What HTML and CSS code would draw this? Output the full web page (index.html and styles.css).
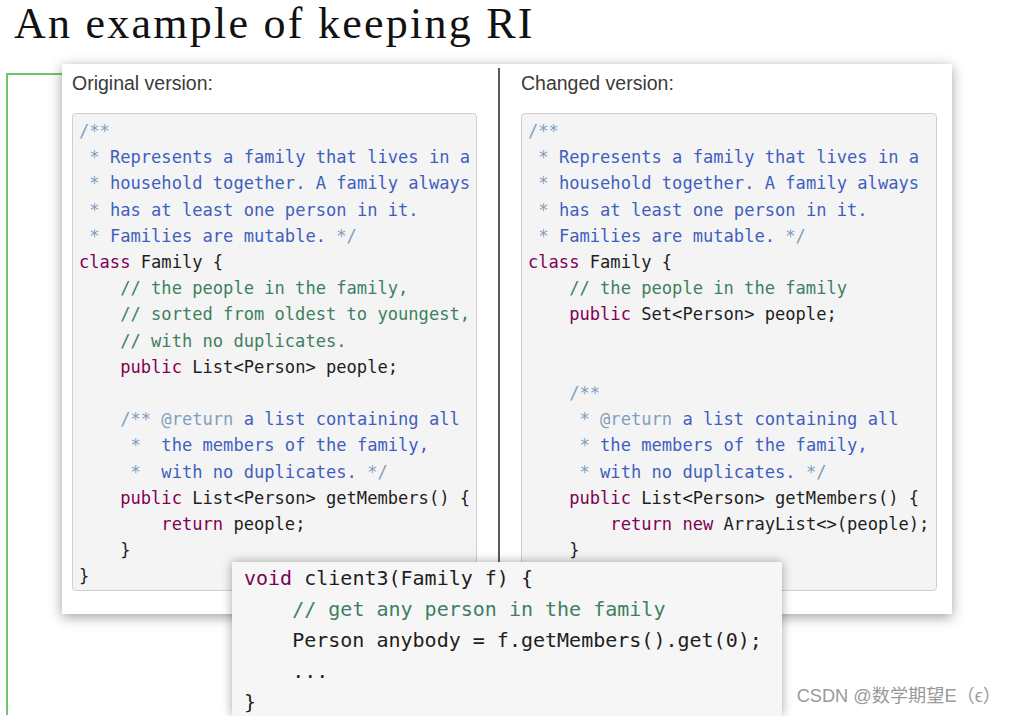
FILE: index.html
```html
<!DOCTYPE html>
<html>
<head>
<meta charset="utf-8">
<link rel="stylesheet" href="styles.css">
</head>
<body>
<h1 class="title">An example of keeping RI</h1>
<div class="stage">
  <div class="card">
    <div class="col col-left">
      <div class="label">Original version:</div>
<pre class="code"><span class="jm">/**</span>
<span class="jm"> *</span><span class="jd"> Represents a family that lives in a</span>
<span class="jm"> *</span><span class="jd"> household together. A family always</span>
<span class="jm"> *</span><span class="jd"> has at least one person in it.</span>
<span class="jm"> *</span><span class="jd"> Families are mutable. </span><span class="jm">*/</span>
<span class="kw">class</span> Family {
    <span class="cm">// the people in the family,</span>
    <span class="cm">// sorted from oldest to youngest,</span>
    <span class="cm">// with no duplicates.</span>
    <span class="kw">public</span> List&lt;Person&gt; people;

    <span class="jm">/**</span> <span class="jm">@return</span><span class="jd"> a list containing all</span>
     <span class="jm">*</span><span class="jd">  the members of the family,</span>
     <span class="jm">*</span><span class="jd">  with no duplicates. </span><span class="jm">*/</span>
    <span class="kw">public</span> List&lt;Person&gt; getMembers() {
        <span class="kw">return</span> people;
    }
}</pre>
    </div>
    <div class="divider"></div>
    <div class="col col-right">
      <div class="label">Changed version:</div>
<pre class="code"><span class="jm">/**</span>
<span class="jm"> *</span><span class="jd"> Represents a family that lives in a</span>
<span class="jm"> *</span><span class="jd"> household together. A family always</span>
<span class="jm"> *</span><span class="jd"> has at least one person in it.</span>
<span class="jm"> *</span><span class="jd"> Families are mutable. </span><span class="jm">*/</span>
<span class="kw">class</span> Family {
    <span class="cm">// the people in the family</span>
    <span class="kw">public</span> Set&lt;Person&gt; people;


    <span class="jm">/**</span>
     <span class="jm">*</span> <span class="jm">@return</span><span class="jd"> a list containing all</span>
     <span class="jm">*</span><span class="jd"> the members of the family,</span>
     <span class="jm">*</span><span class="jd"> with no duplicates. </span><span class="jm">*/</span>
    <span class="kw">public</span> List&lt;Person&gt; getMembers() {
        <span class="kw">return</span> <span class="kw">new</span> ArrayList&lt;&gt;(people);
    }
}</pre>
    </div>
  </div>
</div>
<pre class="client"><span class="kw">void</span> client3(Family f) {
    <span class="cm">// get any person in the family</span>
    Person anybody = f.getMembers().get(0);
    ...
}</pre>
<div class="watermark">CSDN @数学期望E（ϵ）</div>
</body>
</html>
```
FILE: styles.css
```css
html, body {
  margin: 0;
  padding: 0;
  background: #ffffff;
}
body {
  position: relative;
  width: 1012px;
  height: 716px;
  overflow: hidden;
}
.title {
  margin: 0;
  padding: 2px 0 0 14px;
  height: 45px;
  font-family: "Liberation Serif", "Times New Roman", serif;
  font-weight: normal;
  font-size: 44px;
  line-height: 44px;
  letter-spacing: 2.25px;
  color: #111111;
}
.stage {
  margin-top: 26px;
  margin-left: 6px;
  width: 54px;
  height: 640px;
  border-top: 2px solid #6cc66c;
  border-left: 2px solid #6cc66c;
}
.card {
  margin-top: -11px;
  margin-left: 54px;
  width: 890px;
  box-sizing: border-box;
  display: flex;
  padding: 4px 15px 0 0;
  height: 550px;
  background: #ffffff;
  box-shadow: 0 3px 12px rgba(0, 0, 0, 0.38);
}
.col {
  padding-top: 3px;
  flex: none;
}
.col-left {
  padding-left: 10px;
  width: 405px;
  margin-right: 21px;
}
.col-right {
  padding-left: 21px;
  width: 416px;
}
.divider {
  flex: none;
  width: 2px;
  background: #5a5a5a;
  margin-bottom: 20px;
}
.label {
  font-family: "Liberation Sans", Arial, sans-serif;
  font-size: 19.5px;
  line-height: 24px;
  color: #3a3a3a;
  margin-bottom: 18px;
}
.code {
  margin: 0;
  box-sizing: border-box;
  height: 478px;
  padding: 4px 0 0 6px;
  background: #f4f4f4;
  border: 1px solid #cfcfcf;
  border-radius: 4px;
  font-family: "DejaVu Sans Mono", "Liberation Mono", monospace;
  font-size: 17.1px;
  line-height: 26.2px;
  color: #1e1e1e;
  overflow: hidden;
}
.kw { color: #7f0055; }
.cm { color: #3f7f5f; }
.jd { color: #3f5fbf; }
.jm { color: #7f9fbf; }
.client {
  position: absolute;
  left: 232px;
  top: 562px;
  width: 550px;
  height: 154px;
  box-sizing: border-box;
  margin: 0;
  padding: 1px 12px;
  background: #f6f6f6;
  box-shadow: 0 0 10px rgba(0, 0, 0, 0.35);
  font-family: "DejaVu Sans Mono", "Liberation Mono", monospace;
  font-size: 20px;
  line-height: 31px;
  color: #1e1e1e;
  overflow: hidden;
}
.watermark {
  position: absolute;
  right: 11px;
  bottom: 9px;
  font-family: "Liberation Sans", "Noto Sans CJK SC", sans-serif;
  font-size: 18.2px;
  color: #9a9a9a;
}
```
